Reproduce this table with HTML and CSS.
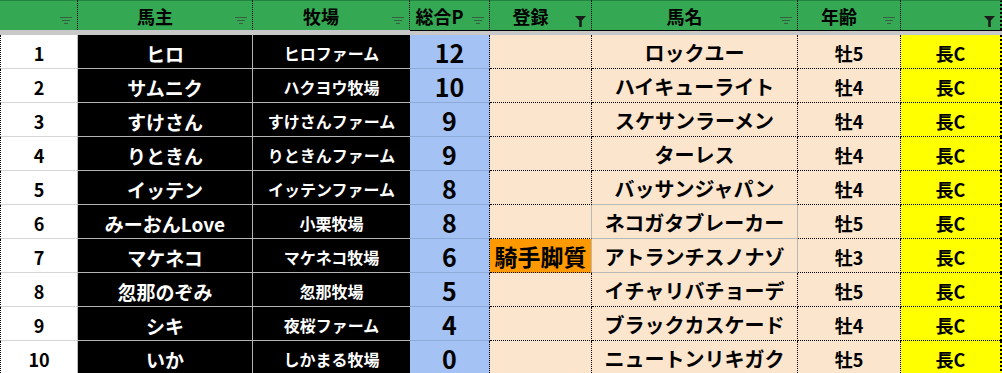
FILE: index.html
```html
<!DOCTYPE html>
<html lang="ja">
<head>
<meta charset="utf-8">
<title>馬主一覧</title>
<link rel="stylesheet" href="styles.css">
</head>
<body>
<div class="sheet">
  <div class="hd"><svg class="flt" width="12" height="7" viewBox="0 0 12 7"><rect x="0" y="0" width="12" height="1"/><rect x="2" y="3" width="8" height="1"/><rect x="4" y="6" width="4" height="1"/></svg></div>
  <div class="hd">馬主<svg class="flt" width="12" height="7" viewBox="0 0 12 7"><rect x="0" y="0" width="12" height="1"/><rect x="2" y="3" width="8" height="1"/><rect x="4" y="6" width="4" height="1"/></svg></div>
  <div class="hd">牧場<svg class="flt" width="12" height="7" viewBox="0 0 12 7"><rect x="0" y="0" width="12" height="1"/><rect x="2" y="3" width="8" height="1"/><rect x="4" y="6" width="4" height="1"/></svg></div>
  <div class="hd">総合P<svg class="flt" width="12" height="7" viewBox="0 0 12 7"><rect x="0" y="0" width="12" height="1"/><rect x="2" y="3" width="8" height="1"/><rect x="4" y="6" width="4" height="1"/></svg></div>
  <div class="hd">登録<svg class="flt on" width="11" height="11" viewBox="0 0 11 11"><path d="M0 0H11L6.8 4.6V11H4.2V4.6Z"/></svg></div>
  <div class="hd">馬名<svg class="flt" width="12" height="7" viewBox="0 0 12 7"><rect x="0" y="0" width="12" height="1"/><rect x="2" y="3" width="8" height="1"/><rect x="4" y="6" width="4" height="1"/></svg></div>
  <div class="hd">年齢<svg class="flt" width="12" height="7" viewBox="0 0 12 7"><rect x="0" y="0" width="12" height="1"/><rect x="2" y="3" width="8" height="1"/><rect x="4" y="6" width="4" height="1"/></svg></div>
  <div class="hd"><svg class="flt on" width="11" height="11" viewBox="0 0 11 11"><path d="M0 0H11L6.8 4.6V11H4.2V4.6Z"/></svg></div>

  <div class="band"></div>
  <div class="band band-dark"></div>

  <div class="c c-no">1</div><div class="c c-owner">ヒロ</div><div class="c c-farm">ヒロファーム</div><div class="c c-pt">12</div><div class="c c-reg"></div><div class="c c-horse">ロックユー</div><div class="c c-age">牡5</div><div class="c c-dist">長C</div>
  <div class="c c-no">2</div><div class="c c-owner">サムニク</div><div class="c c-farm">ハクヨウ牧場</div><div class="c c-pt">10</div><div class="c c-reg"></div><div class="c c-horse">ハイキューライト</div><div class="c c-age">牡4</div><div class="c c-dist">長C</div>
  <div class="c c-no">3</div><div class="c c-owner">すけさん</div><div class="c c-farm">すけさんファーム</div><div class="c c-pt">9</div><div class="c c-reg"></div><div class="c c-horse">スケサンラーメン</div><div class="c c-age">牡4</div><div class="c c-dist">長C</div>
  <div class="c c-no">4</div><div class="c c-owner">りときん</div><div class="c c-farm">りときんファーム</div><div class="c c-pt">9</div><div class="c c-reg"></div><div class="c c-horse">ターレス</div><div class="c c-age">牡4</div><div class="c c-dist">長C</div>
  <div class="c c-no">5</div><div class="c c-owner">イッテン</div><div class="c c-farm">イッテンファーム</div><div class="c c-pt">8</div><div class="c c-reg"></div><div class="c c-horse solid-b">バッサンジャパン</div><div class="c c-age">牡4</div><div class="c c-dist">長C</div>
  <div class="c c-no">6</div><div class="c c-owner">みーおんLove</div><div class="c c-farm">小栗牧場</div><div class="c c-pt">8</div><div class="c c-reg solid-r"></div><div class="c c-horse solid-b solid-r">ネコガタブレーカー</div><div class="c c-age">牡5</div><div class="c c-dist">長C</div>
  <div class="c c-no">7</div><div class="c c-owner">マケネコ</div><div class="c c-farm">マケネコ牧場</div><div class="c c-pt">6</div><div class="c c-reg solid-r jockey">騎手脚質</div><div class="c c-horse solid-b solid-r">アトランチスノナゾ</div><div class="c c-age">牡3</div><div class="c c-dist">長C</div>
  <div class="c c-no">8</div><div class="c c-owner">忽那のぞみ</div><div class="c c-farm">忽那牧場</div><div class="c c-pt">5</div><div class="c c-reg"></div><div class="c c-horse">イチャリバチョーデ</div><div class="c c-age">牡5</div><div class="c c-dist">長C</div>
  <div class="c c-no">9</div><div class="c c-owner">シキ</div><div class="c c-farm">夜桜ファーム</div><div class="c c-pt">4</div><div class="c c-reg"></div><div class="c c-horse">ブラックカスケード</div><div class="c c-age">牡4</div><div class="c c-dist">長C</div>
  <div class="c c-no">10</div><div class="c c-owner">いか</div><div class="c c-farm">しかまる牧場</div><div class="c c-pt">0</div><div class="c c-reg"></div><div class="c c-horse">ニュートンリキガク</div><div class="c c-age">牡5</div><div class="c c-dist">長C</div>
</div>
</body>
</html>
```

FILE: styles.css
```css
html, body {
  margin: 0;
  padding: 0;
  background: #ffffff;
  overflow: hidden;
}

body {
  font-family: "Noto Sans CJK JP", "Noto Sans", sans-serif;
  font-weight: 700;
  color: #000;
}

.sheet {
  display: grid;
  grid-template-columns: 78px 175px 157px 80px 102px 206px 103px 101px;
  grid-template-rows: 30px 5px repeat(10, 34px);
  width: 1002px;
}

.hd {
  position: relative;
  box-sizing: border-box;
  background: #34a853;
  border-top: 1px solid #23843f;
  border-right: 1px dotted #000;
  display: flex;
  align-items: center;
  justify-content: center;
  padding-right: 20px;
  font-size: 18px;
  line-height: 1;
}

.hd:last-child,
.hd:nth-child(8) {
  border-right: 2px dotted #000;
}

.flt {
  position: absolute;
  right: 5px;
  top: 16px;
  fill: #3a5e44;
}

.flt.on {
  top: 15px;
  fill: #1b1b1b;
}

.band {
  grid-column: 1 / 4;
  background: #c8c8c8;
}

.band-dark {
  grid-column: 4 / 9;
  box-sizing: border-box;
  border-top: 2px solid #000;
  margin-top: -1px;
}

.c {
  box-sizing: border-box;
  display: flex;
  align-items: center;
  justify-content: center;
  padding-top: 3px;
  line-height: 1;
  white-space: nowrap;
  overflow: visible;
}

.c-no {
  background: #fff;
  border-left: 1px dotted #000;
  border-right: 1px solid #bdbdbd;
  border-bottom: 1px solid #d6d6d6;
  font-size: 18px;
}

.c-owner {
  background: #000;
  color: #fff;
  border-right: 1px solid #b4b4b4;
  border-bottom: 1px solid #b4b4b4;
  font-size: 19px;
}

.c-farm {
  background: #000;
  color: #fff;
  border-bottom: 1px solid #b4b4b4;
  font-size: 16px;
}

.c-pt {
  background: #a4c2f4;
  border-right: 1px dotted #000;
  border-bottom: 1px solid #8eaad8;
  font-size: 25px;
  padding-top: 1px;
}

.c-reg {
  background: #fce5cd;
  border-right: 1px dotted #000;
  border-bottom: 1px dotted #000;
}

.c-horse {
  background: #fce5cd;
  border-right: 1px dotted #000;
  border-bottom: 1px dotted #000;
  font-size: 20px;
}

.c-age {
  background: #fce5cd;
  border-right: 1px dotted #000;
  border-bottom: 1px dotted #000;
  font-size: 18px;
}

.c-dist {
  background: #ffff00;
  border-right: 2px dotted #000;
  border-bottom: 1px dotted #000;
  font-size: 18px;
}

.solid-r {
  border-right: 1px solid #b8b8b8;
}

.solid-b {
  border-bottom: 1px solid #b8b8b8;
}

.jockey {
  background: #ff9900;
  font-size: 23px;
  padding-top: 1px;
  border-bottom: 1px dotted #000;
}
```
